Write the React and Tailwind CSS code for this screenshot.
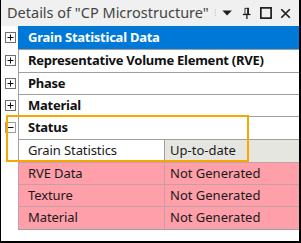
import React from "react";

function PlusBox({ minus }) {
  return (
    <svg width="11" height="11" viewBox="0 0 11 11" className="block">
      <rect x="0.5" y="0.5" width="10" height="10" fill="#fff" stroke={minus ? "#a0a0a0" : "#707070"} />
      <line x1="2.5" y1="5.5" x2="8.5" y2="5.5" stroke="#111" strokeWidth="1" />
      {!minus && <line x1="5.5" y1="2.5" x2="5.5" y2="8.5" stroke="#111" strokeWidth="1" />}
    </svg>
  );
}

function CatRow({ label, h, selected, minus, first }) {
  return (
    <div className={`flex ${h}`}>
      <div className="w-[17px] flex items-center justify-center pl-[1px]">
        <PlusBox minus={minus} />
      </div>
      <div
        className={`flex-1 flex items-center pl-[9px] font-bold text-[13px] tracking-[-0.25px] border-l border-[#a0a0a0] ${
          first ? "" : "border-t"
        } ${selected ? "bg-[#0078d7] text-white border-l-[#0078d7]" : "text-[#111]"}`}
      >
        {label}
      </div>
    </div>
  );
}

function PropRow({ label, value, h, pink }) {
  const cellBg = pink ? "bg-[#fe9fa9]" : "";
  const line = pink ? "border-[#c4a0a4]" : "border-[#a0a0a0]";
  return (
    <div className={`flex ${h}`}>
      <div className="w-[17px]" />
      <div className={`w-[146px] flex items-center pl-[9px] text-[13px] tracking-[-0.1px] text-[#1a1a1a] border-l border-t ${line} ${pink ? cellBg : "bg-white"}`}>
        {label}
      </div>
      <div className={`flex-1 flex items-center pl-[5px] text-[13px] text-[#1a1a1a] border-l border-t ${line} ${pink ? cellBg : "bg-[#e6e6e1]"}`}>
        {value}
      </div>
    </div>
  );
}

export default function App() {
  return (
    <div className="relative w-[301px] h-[243px] bg-white border-l border-r-2 border-b-2 border-black flex flex-col font-['Noto_Sans',sans-serif] overflow-hidden">
      <div className="h-[26px] shrink-0 bg-[#f0f0f0] flex items-center pl-[6px] pr-[8px]">
        <span className="text-[14.5px] text-[#444] whitespace-nowrap">Details of "CP Microstructure"</span>
        <svg width="3" height="12" viewBox="0 0 3 12" className="ml-[5px]">
          <rect x="1" y="2" width="1" height="1" fill="#999" />
          <rect x="1" y="5" width="1" height="1" fill="#999" />
          <rect x="1" y="8" width="1" height="1" fill="#999" />
        </svg>
        <svg width="12" height="8" viewBox="0 0 12 8" className="ml-[6px]">
          <polygon points="0.5,1 11.5,1 6,7" fill="#1e1e1e" />
        </svg>
        <svg width="11" height="14" viewBox="0 0 11 14" className="ml-[9px]">
          <rect x="3.5" y="1.5" width="4" height="7" fill="none" stroke="#1e1e1e" />
          <rect x="6" y="1" width="2" height="8" fill="#1e1e1e" />
          <rect x="1" y="8" width="9" height="1.5" fill="#1e1e1e" />
          <rect x="5" y="9" width="1.5" height="5" fill="#1e1e1e" />
        </svg>
        <svg width="14" height="14" viewBox="0 0 14 14" className="ml-[9px]">
          <rect x="1" y="1" width="12" height="12" fill="none" stroke="#1e1e1e" strokeWidth="2" />
        </svg>
        <svg width="13" height="13" viewBox="0 0 13 13" className="ml-[8px]">
          <path d="M1.5 1.5 L11.5 11.5 M11.5 1.5 L1.5 11.5" stroke="#1e1e1e" strokeWidth="2" />
        </svg>
      </div>
      <div className="flex flex-col">
        <CatRow label="Grain Statistical Data" h="h-[23px]" selected first />
        <CatRow label="Representative Volume Element (RVE)" h="h-[23px]" />
        <CatRow label="Phase" h="h-[22px]" />
        <CatRow label="Material" h="h-[22px]" />
        <CatRow label="Status" h="h-[23px]" minus />
        <PropRow label="Grain Statistics" value="Up-to-date" h="h-[23px]" />
        <PropRow label="RVE Data" value="Not Generated" h="h-[22px]" pink />
        <PropRow label="Texture" value="Not Generated" h="h-[22px]" pink />
        <PropRow label="Material" value="Not Generated" h="h-[23px]" pink />
        <div className="flex">
          <div className="w-[17px]" />
          <div className="flex-1 border-t border-[#a0a0a0]" />
        </div>
      </div>
      <div className="absolute left-[5px] top-[115px] w-[243px] h-[47px] border-2 border-[#f5a800] pointer-events-none" />
    </div>
  );
}
